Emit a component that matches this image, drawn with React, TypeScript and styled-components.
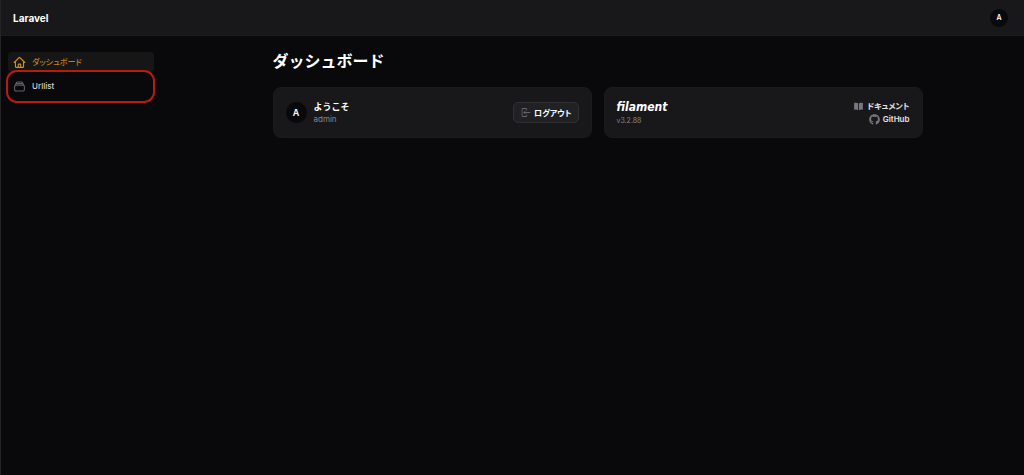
import React from 'react';
import styled, { createGlobalStyle } from 'styled-components';
import {
  HiOutlineHome,
  HiOutlineRectangleStack,
  HiMiniArrowLeftOnRectangle,
  HiMiniBookOpen,
} from 'react-icons/hi2';
import { FaGithub } from 'react-icons/fa';

const GlobalStyle = createGlobalStyle`
  *, *::before, *::after { box-sizing: border-box; }
  body {
    margin: 0;
    background: #09090b;
    color: #fff;
    font-family: Inter, "Noto Sans CJK JP", sans-serif;
    font-size: 8px;
    font-feature-settings: "palt";
    line-height: 12px;
  }
  h1, h2 { font-feature-settings: normal; }
`;

const Page = styled.div`
  display: flex;
  flex-direction: column;
  min-height: 100vh;
  border-left: 1px solid #242427;
`;

const TopBar = styled.header`
  display: flex;
  align-items: center;
  justify-content: space-between;
  height: 36px;
  padding: 0 16px 0 12px;
  background: #18181b;
  border-bottom: 1px solid #1c1c1f;
`;

const Brand = styled.a`
  color: #fff;
  font-size: 10px;
  font-weight: 700;
  line-height: 16px;
  text-decoration: none;
`;

const Avatar = styled.span<{ $size: number }>`
  display: flex;
  flex: none;
  align-items: center;
  justify-content: center;
  width: ${(p) => p.$size}px;
  height: ${(p) => p.$size}px;
  border-radius: 50%;
  background: #09090b;
  color: #fff;
  font-size: ${(p) => (p.$size > 20 ? 9 : 7)}px;
  font-weight: 600;
`;

const UserButton = styled.button`
  padding: 0;
  border: 0;
  border-radius: 50%;
  background: none;
  font: inherit;
`;

const Body = styled.div`
  display: flex;
  flex: 1;
`;

const Sidebar = styled.nav`
  flex: none;
  width: 170px;
  padding: 16px 17px 16px 7px;
`;

const NavList = styled.ul`
  display: flex;
  flex-direction: column;
  gap: 4px;
  margin: 0;
  padding: 0;
  list-style: none;
`;

const NavItem = styled.li<{ $marked?: boolean }>`
  position: relative;
  ${(p) =>
    p.$marked &&
    `&::after {
      content: "";
      position: absolute;
      inset: -6px -1px -7px -2px;
      border: 2px solid #b81c0f;
      border-radius: 11px;
      pointer-events: none;
    }`}
`;

const NavLink = styled.a<{ $active?: boolean }>`
  display: flex;
  align-items: center;
  gap: 6px;
  height: 20px;
  padding: 0 5px;
  border-radius: 4px;
  background: ${(p) => (p.$active ? '#161617' : 'transparent')};
  color: ${(p) => (p.$active ? '#b8801e' : '#d4d4d8')};
  font-weight: 500;
  text-decoration: none;

  svg {
    width: 13px;
    height: 13px;
    color: ${(p) => (p.$active ? '#d6941f' : '#626269')};
    stroke-width: 2;
  }
`;

const Main = styled.main`
  flex: 1;
  min-width: 0;
`;

const Content = styled.div`
  max-width: 650px;
  margin: 0 auto;
  padding: 16px 0;
`;

const Title = styled.h1`
  margin: 0 0 16px;
  font-size: 16px;
  font-weight: 600;
  line-height: 19px;
`;

const Widgets = styled.div`
  display: grid;
  grid-template-columns: 1fr 1fr;
  gap: 12px;
`;

const Card = styled.section`
  display: flex;
  align-items: center;
  justify-content: space-between;
  min-height: 51px;
  padding: 10px 12px;
  border: 1px solid #1b1b1e;
  border-radius: 8px;
  background: #18181b;
`;

const Account = styled.div`
  display: flex;
  align-items: center;
  gap: 7px;
`;

const Welcome = styled.h2`
  margin: 0;
  font-size: 9px;
  font-weight: 600;
  line-height: 12px;
`;

const Muted = styled.p<{ $small?: boolean }>`
  margin: 0;
  color: #85858d;
  font-size: ${(p) => (p.$small ? 7 : 8)}px;
  line-height: 12px;
`;

const LogoutButton = styled.button`
  display: flex;
  align-items: center;
  gap: 3px;
  height: 21px;
  padding: 0 6px;
  border: 1px solid #303033;
  border-radius: 5px;
  background: #212124;
  color: #fff;
  font: inherit;
  font-feature-settings: inherit;
  font-weight: 600;

  svg {
    width: 11px;
    height: 11px;
    color: #65656d;
  }
`;

const Wordmark = styled.a`
  display: block;
  color: #fff;
  font-family: "DejaVu Sans Condensed", "DejaVu Sans", sans-serif;
  font-size: 12px;
  font-style: italic;
  font-weight: 700;
  line-height: 16px;
  text-decoration: none;
`;

const Links = styled.div`
  display: flex;
  flex-direction: column;
  align-items: flex-end;
  gap: 1px;
`;

const ResourceLink = styled.a`
  display: flex;
  align-items: center;
  gap: 3px;
  color: #e4e4e7;
  font-weight: 600;
  text-decoration: none;

  svg {
    width: 11px;
    height: 11px;
    color: #77777f;
  }
`;

export default function App() {
  return (
    <>
      <GlobalStyle />
      <Page>
        <TopBar>
          <Brand href="#">Laravel</Brand>
          <UserButton type="button" aria-label="admin">
            <Avatar $size={18}>A</Avatar>
          </UserButton>
        </TopBar>
        <Body>
          <Sidebar>
            <NavList>
              <NavItem>
                <NavLink href="#" $active aria-current="page">
                  <HiOutlineHome />
                  ダッシュボード
                </NavLink>
              </NavItem>
              <NavItem $marked>
                <NavLink href="#urllist">
                  <HiOutlineRectangleStack />
                  Urllist
                </NavLink>
              </NavItem>
            </NavList>
          </Sidebar>
          <Main>
            <Content>
              <Title>ダッシュボード</Title>
              <Widgets>
                <Card>
                  <Account>
                    <Avatar $size={21}>A</Avatar>
                    <div>
                      <Welcome>ようこそ</Welcome>
                      <Muted>admin</Muted>
                    </div>
                  </Account>
                  <LogoutButton type="button">
                    <HiMiniArrowLeftOnRectangle />
                    ログアウト
                  </LogoutButton>
                </Card>
                <Card>
                  <div>
                    <Wordmark href="#filament">filament</Wordmark>
                    <Muted $small>v3.2.88</Muted>
                  </div>
                  <Links>
                    <ResourceLink href="#docs">
                      <HiMiniBookOpen />
                      ドキュメント
                    </ResourceLink>
                    <ResourceLink href="#github">
                      <FaGithub />
                      GitHub
                    </ResourceLink>
                  </Links>
                </Card>
              </Widgets>
            </Content>
          </Main>
        </Body>
      </Page>
    </>
  );
}
